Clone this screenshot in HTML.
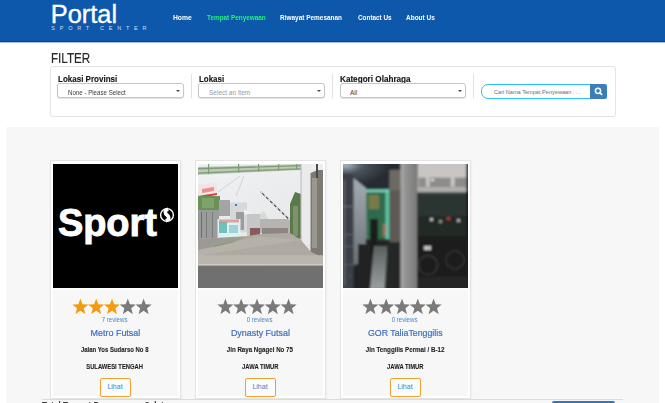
<!DOCTYPE html>
<html><head><meta charset="utf-8">
<style>
*{box-sizing:border-box;margin:0;padding:0}
html,body{width:665px;height:403px;overflow:hidden;background:#fff;font-family:"Liberation Sans",sans-serif;position:relative}
.a{position:absolute;white-space:nowrap}
.sx{display:inline-block;transform-origin:0 0}
.ctr span{display:inline-block;transform-origin:50% 0}
#hdr{left:0;top:0;width:665px;height:42px;background:#0e58ac;border-bottom:1px solid #0542a0;box-shadow:0 1px 0.6px rgba(10,70,156,.35)}
.logo{left:50.8px;top:-1px;font-size:25.4px;color:#fff;line-height:30px;-webkit-text-stroke:0.35px #fff}
.sub{left:51.3px;top:24.4px;font-size:5.5px;letter-spacing:4.75px;line-height:8px;color:#d4def0}
.nav{top:11px;font-size:7.5px;font-weight:bold;color:#fff;line-height:14px}
.title{left:50.9px;top:48px;font-size:14px;color:#2a2a2a;line-height:20px;-webkit-text-stroke:0.2px #2a2a2a}
#panel{left:50px;top:66px;width:566px;height:51px;border:1px solid #e3e3e3;border-radius:3px;background:#fff}
.lbl{font-size:9px;font-weight:bold;color:#161616;line-height:12px;top:73px;-webkit-text-stroke:0.15px #161616}
.sel{top:83.3px;height:14.4px;border:1px solid #c6c6c6;border-radius:3px;background:#fff;box-shadow:0 1px 1px rgba(0,0,0,.12)}
.sel>span{position:absolute;top:3.5px;font-size:6.5px;line-height:10px;color:#3a3a3a}
.sel i{position:absolute;right:3.2px;top:5.3px;width:0;height:0;border-left:2px solid transparent;border-right:2px solid transparent;border-top:2.6px solid #444}
.div{top:74px;width:1px;height:24px;background:#e2e2e2}
#srch{left:481px;top:84px;width:111px;height:15px;border:1.7px solid #2cbef4;border-radius:7px 0 0 7px;background:#fff}
#srch span{position:absolute;left:12px;top:2px;font-size:5.6px;color:#6e6e6e;line-height:10px}
#btn{left:590px;top:84px;width:17px;height:15px;background:#3a7fba;border-radius:0 2px 2px 0}
#sec{left:6px;top:127px;width:653px;height:280px;background:#f7f7f7}
.card{top:160px;width:131px;height:239.3px;background:#fff;border:1px solid #e4e4e4;box-shadow:1px 1px 1.5px rgba(0,0,0,.04)}
.img{top:163.5px;width:125px;height:124.5px;overflow:hidden}
.cbody{top:290px;width:125px;height:106px;background:#f7f7f7}
.ctr{width:120px;text-align:center}
.rev{top:315px;font-size:6.9px;color:#4a86c6;line-height:10px}
.name{top:326px;font-size:9.5px;color:#3a6ec0;line-height:14px;-webkit-text-stroke:0.2px #3a6ec0}
.addr{top:345px;font-size:6.5px;font-weight:bold;color:#1e1e1e;line-height:10px;-webkit-text-stroke:0.1px #1e1e1e}
.prov{top:362px;font-size:6.5px;font-weight:bold;color:#1e1e1e;line-height:10px;-webkit-text-stroke:0.1px #1e1e1e}
.lh{top:377.5px;width:31px;height:19px;border:1.6px solid #f0a030;border-radius:2px;background:#fbfbfb;font-size:7px;color:#4582cc;text-align:center;line-height:16.6px}

#hr{left:42px;top:399.3px;width:581px;height:1px;background:#dcdcdc}
#ft{left:42px;top:399px;font-size:9px;font-weight:bold;color:#3a3a3a;line-height:12px}
#fbtn{left:552px;top:401px;width:63px;height:10px;background:#3479b6;border-radius:2px}

</style></head><body>
<div id="hdr" class="a"></div>
<div class="a logo">Portal</div>
<div class="a sub">SPORT CENTER</div>
<div class="a nav" style="left:172.5px"><span class="sx" style="transform:scaleX(0.9)">Home</span></div>
<div class="a nav" style="left:206.5px;color:#1ff57a"><span class="sx" style="transform:scaleX(0.85)">Tempat Penyewaan</span></div>
<div class="a nav" style="left:280px"><span class="sx" style="transform:scaleX(0.86)">Riwayat Pemesanan</span></div>
<div class="a nav" style="left:357.5px"><span class="sx" style="transform:scaleX(0.85)">Contact Us</span></div>
<div class="a nav" style="left:406px"><span class="sx" style="transform:scaleX(0.865)">About Us</span></div>

<div class="a title"><span class="sx" style="transform:scaleX(0.83)">FILTER</span></div>
<div id="panel" class="a"></div>
<div class="a lbl" style="left:58px"><span class="sx" style="transform:scaleX(0.89)">Lokasi Provinsi</span></div>
<div class="a lbl" style="left:199px"><span class="sx" style="transform:scaleX(0.88)">Lokasi</span></div>
<div class="a lbl" style="left:340px"><span class="sx" style="transform:scaleX(0.905)">Kategori Olahraga</span></div>
<div class="a sel" style="left:57px;width:127px"><span style="left:10px"><span class="sx" style="transform:scaleX(0.945)">None - Please Select</span></span><i></i></div>
<div class="a sel" style="left:198px;width:127px"><span style="left:10px;color:#999">Select an item</span><i></i></div>
<div class="a sel" style="left:340px;width:126px"><span style="left:9px">All</span><i></i></div>
<div class="a div" style="left:191px"></div>
<div class="a div" style="left:332px"></div>
<div class="a div" style="left:473px"></div>
<div id="srch" class="a"><span>Cari Nama Tempat Penyewaan . . .</span></div>
<div id="btn" class="a"><svg width="17" height="15" viewBox="0 0 17 15"><circle cx="8" cy="6.8" r="2.6" fill="none" stroke="#fff" stroke-width="1.5"/><line x1="9.8" y1="8.6" x2="11.6" y2="10.4" stroke="#fff" stroke-width="1.7" stroke-linecap="round"/></svg></div>

<div id="sec" class="a"></div>

<div class="a card" style="left:49.5px"></div>
<div class="a img" style="left:52.5px"><div style="position:absolute;left:0;top:0;width:125px;height:125px;background:#000"></div>
<div style="position:absolute;left:5.5px;top:37.5px;font-size:38px;font-weight:bold;color:#fff;line-height:44px;letter-spacing:-0.1px;-webkit-text-stroke:0.9px #fff">Sport</div>
<svg style="position:absolute;left:106.8px;top:43.4px" width="16" height="16" viewBox="0 0 16 16"><circle cx="8" cy="8" r="7.1" fill="#fff"/><circle cx="8" cy="8" r="5.7" fill="#000"/><path d="M9.2,2.2 C4.8,3.6 6.2,6.6 8,8 C9.8,9.4 11.2,12.4 6.8,13.8" fill="none" stroke="#fff" stroke-width="3.6"/></svg>
</div>
<div class="a cbody" style="left:52.5px"></div>
<svg class="a" style="left:72.0px;top:298px" width="84" height="20" viewBox="0 0 84 20"><polygon points="8.40,0.60 10.52,6.28 16.58,6.54 11.84,10.32 13.45,16.16 8.40,12.81 3.35,16.16 4.96,10.32 0.22,6.54 6.28,6.28" fill="#f39c12" stroke="#fff" stroke-width="1" stroke-linejoin="round" paint-order="stroke"/><polygon points="24.20,0.60 26.32,6.28 32.38,6.54 27.64,10.32 29.25,16.16 24.20,12.81 19.15,16.16 20.76,10.32 16.02,6.54 22.08,6.28" fill="#f39c12" stroke="#fff" stroke-width="1" stroke-linejoin="round" paint-order="stroke"/><polygon points="40.00,0.60 42.12,6.28 48.18,6.54 43.44,10.32 45.05,16.16 40.00,12.81 34.95,16.16 36.56,10.32 31.82,6.54 37.88,6.28" fill="#f39c12" stroke="#fff" stroke-width="1" stroke-linejoin="round" paint-order="stroke"/><polygon points="55.80,0.60 57.92,6.28 63.98,6.54 59.24,10.32 60.85,16.16 55.80,12.81 50.75,16.16 52.36,10.32 47.62,6.54 53.68,6.28" fill="#7a7a7a" stroke="#fff" stroke-width="1" stroke-linejoin="round" paint-order="stroke"/><polygon points="71.60,0.60 73.72,6.28 79.78,6.54 75.04,10.32 76.65,16.16 71.60,12.81 66.55,16.16 68.16,10.32 63.42,6.54 69.48,6.28" fill="#7a7a7a" stroke="#fff" stroke-width="1" stroke-linejoin="round" paint-order="stroke"/></svg>
<div class="a ctr rev" style="left:55.0px"><span style="transform:scaleX(0.885)">7 reviews</span></div>
<div class="a ctr name" style="left:55.0px"><span style="transform:scaleX(0.945)">Metro Futsal</span></div>
<div class="a ctr addr" style="left:55.0px"><span style="transform:scaleX(0.92)">Jalan Yos Sudarso No 8</span></div>
<div class="a ctr prov" style="left:55.0px"><span style="transform:scaleX(0.897)">SULAWESI TENGAH</span></div>
<div class="a lh" style="left:99.5px"><span>Lihat</span></div>

<div class="a card" style="left:194.5px"></div>
<div class="a img" style="left:197.5px"><svg style="position:absolute;left:0;top:0" width="125" height="125" viewBox="0 0 125 125">
<defs><filter id="bl2" x="-5%" y="-5%" width="110%" height="110%"><feGaussianBlur stdDeviation="0.55"/></filter>
<linearGradient id="sky2" x1="0" y1="0" x2="0.3" y2="1"><stop offset="0" stop-color="#f0f1f2"/><stop offset="1" stop-color="#e2e4e6"/></linearGradient></defs>
<rect x="0" y="0" width="125" height="125" fill="url(#sky2)"/>
<g filter="url(#bl2)">
<polygon points="-2,3 104,0 104,6 -2,11" fill="#bccab6"/>
<polygon points="-2,4 104,1 104,2.3 -2,5.5" fill="#7f9c78"/>
<polygon points="-2,8.5 104,4 104,5.5 -2,10" fill="#86a07e"/>
<rect x="10" y="0" width="1.2" height="10" fill="#7f9c78"/>
<rect x="40" y="0" width="1.2" height="8.5" fill="#7f9c78"/>
<rect x="60" y="0" width="1.2" height="7.5" fill="#7f9c78"/>
<rect x="80" y="0" width="1.2" height="6.5" fill="#7f9c78"/>
<rect x="98" y="0" width="1.2" height="6" fill="#7f9c78"/>
<line x1="20" y1="28" x2="42" y2="12" stroke="#b0b4b8" stroke-width=".5"/>
<line x1="38" y1="32" x2="46" y2="12" stroke="#b0b4b8" stroke-width=".5"/>
<polygon points="0,21 19,18 19,31 0,34" fill="#f0e4e6"/>
<polygon points="4,25 16,23 16,27 4,29" fill="#e89090"/>
<polygon points="0,32 19,29 19,31 0,34" fill="#d04040"/>
<rect x="-2" y="32" width="24" height="16" fill="#6a9258"/>
<rect x="4" y="34" width="12" height="10" fill="#7ea26c"/>
<rect x="21" y="36" width="11" height="16" fill="#a2a4a6"/>
<rect x="32" y="38.5" width="17" height="30" fill="#d6d8da"/>
<rect x="37" y="40" width="2" height="2" fill="#3a7ad8"/>
<rect x="38" y="48" width="8" height="18" fill="#9a9c9e"/>
<polygon points="46,45 56,51 56,53 46,50" fill="#f0f0f0"/>
<rect x="-2" y="46" width="23" height="29" fill="#9a9c9c"/>
<rect x="3" y="48" width="1" height="26" fill="#6a6c6c"/>
<rect x="8" y="48" width="1" height="26" fill="#7a7c7c"/>
<rect x="14" y="48" width="1" height="26" fill="#7a7c7c"/>
<rect x="-2" y="48" width="2.2" height="78" fill="#2a2a2a" opacity=".5"/>
<rect x="19.5" y="55" width="23" height="19" fill="#dff0f0"/>
<rect x="21" y="58" width="8" height="11" fill="#70c0bc"/>
<rect x="31" y="61" width="9" height="8" fill="#a0d0d8"/>
<rect x="21" y="55.5" width="20" height="3" fill="#e06a6a" opacity=".6"/>
<rect x="49" y="50" width="13" height="22" fill="#c4c6c8"/>
<rect x="52" y="64" width="10" height="8" fill="#8a5a5a"/>
<rect x="62" y="55" width="30" height="14" fill="#b6b4b2"/>
<polygon points="62,50 66,47 70,55 62,55" fill="#d8dada"/>
<rect x="64" y="64" width="26" height="6" fill="#8e8482"/>
<line x1="62.5" y1="27.6" x2="93" y2="57.3" stroke="#4a4a4a" stroke-width="1.2"/>
<line x1="62.5" y1="27.6" x2="93" y2="57.3" stroke="#eeeeee" stroke-width="1.2" stroke-dasharray="2.5 3"/>
<polygon points="92,73 92,40 97,28 103,30 103,75" fill="#5a7a4a"/>
<rect x="95" y="42" width="5" height="30" fill="#7e9270"/>
<rect x="103" y="0" width="10" height="80" fill="#eaeaea"/>
<rect x="102.5" y="0" width="1.2" height="80" fill="#c0c0c0"/>
<polygon points="112.5,9 120,6 125,6 125,94 112.5,88" fill="#7c7a72"/>
<rect x="114" y="14" width="5" height="70" fill="#9a988e"/>
<rect x="118" y="0" width="2" height="14" fill="#4a4a4a"/>
<polygon points="-2,75 50,72 62,70 92,69 103,76 113,88 125,94 125,92 -2,92" fill="#aeaaa2"/>
<polygon points="-2,75 48,73 30,80 -2,86" fill="#9c9a94"/>
<polygon points="15,82 35,78 40,79 18,84" fill="#7a9a5a"/>
<polygon points="-2,87 62,72.4 103,76 -2,92" fill="#b6b2aa"/>
<rect x="-2" y="91.2" width="129" height="9.6" fill="#bab6ae"/>
<rect x="-2" y="100.3" width="129" height="1.2" fill="#d4d2ce"/>
<rect x="-2" y="101.5" width="129" height="25" fill="#6f7070"/>
</g>
</svg>
</div>
<div class="a cbody" style="left:197.5px"></div>
<svg class="a" style="left:217.0px;top:298px" width="84" height="20" viewBox="0 0 84 20"><polygon points="8.40,0.60 10.52,6.28 16.58,6.54 11.84,10.32 13.45,16.16 8.40,12.81 3.35,16.16 4.96,10.32 0.22,6.54 6.28,6.28" fill="#7a7a7a" stroke="#fff" stroke-width="1" stroke-linejoin="round" paint-order="stroke"/><polygon points="24.20,0.60 26.32,6.28 32.38,6.54 27.64,10.32 29.25,16.16 24.20,12.81 19.15,16.16 20.76,10.32 16.02,6.54 22.08,6.28" fill="#7a7a7a" stroke="#fff" stroke-width="1" stroke-linejoin="round" paint-order="stroke"/><polygon points="40.00,0.60 42.12,6.28 48.18,6.54 43.44,10.32 45.05,16.16 40.00,12.81 34.95,16.16 36.56,10.32 31.82,6.54 37.88,6.28" fill="#7a7a7a" stroke="#fff" stroke-width="1" stroke-linejoin="round" paint-order="stroke"/><polygon points="55.80,0.60 57.92,6.28 63.98,6.54 59.24,10.32 60.85,16.16 55.80,12.81 50.75,16.16 52.36,10.32 47.62,6.54 53.68,6.28" fill="#7a7a7a" stroke="#fff" stroke-width="1" stroke-linejoin="round" paint-order="stroke"/><polygon points="71.60,0.60 73.72,6.28 79.78,6.54 75.04,10.32 76.65,16.16 71.60,12.81 66.55,16.16 68.16,10.32 63.42,6.54 69.48,6.28" fill="#7a7a7a" stroke="#fff" stroke-width="1" stroke-linejoin="round" paint-order="stroke"/></svg>
<div class="a ctr rev" style="left:200.0px"><span style="transform:scaleX(0.885)">0 reviews</span></div>
<div class="a ctr name" style="left:200.0px"><span style="transform:scaleX(0.94)">Dynasty Futsal</span></div>
<div class="a ctr addr" style="left:200.0px"><span style="transform:scaleX(0.95)">Jln Raya Ngagel No 75</span></div>
<div class="a ctr prov" style="left:200.0px"><span style="transform:scaleX(0.9)">JAWA TIMUR</span></div>
<div class="a lh" style="left:244.5px"><span>Lihat</span></div>

<div class="a card" style="left:339.5px"></div>
<div class="a img" style="left:342.5px"><svg style="position:absolute;left:0;top:0" width="125" height="125" viewBox="0 0 125 125">
<defs>
<filter id="bl3" x="-5%" y="-5%" width="110%" height="110%"><feGaussianBlur stdDeviation="0.8"/></filter>
<radialGradient id="glow3" cx="0.08" cy="0.1" r="0.7"><stop offset="0" stop-color="#a8b8c4"/><stop offset=".4" stop-color="#4a545c"/><stop offset="1" stop-color="#262c30"/></radialGradient>
<linearGradient id="pil3" x1="0" y1="0" x2="1" y2="0"><stop offset="0" stop-color="#acadad"/><stop offset=".3" stop-color="#929392"/><stop offset="1" stop-color="#787977"/></linearGradient>
<linearGradient id="str3" x1="0" y1="0" x2="0" y2="1"><stop offset="0" stop-color="#5a6060"/><stop offset="1" stop-color="#9aa0a0"/></linearGradient>
<linearGradient id="lw3" x1="0" y1="0" x2="0" y2="1"><stop offset="0" stop-color="#a4acb2"/><stop offset="1" stop-color="#6a7076"/></linearGradient>
</defs>
<rect x="0" y="0" width="125" height="125" fill="#222424"/>
<g filter="url(#bl3)">
<rect x="-2" y="-2" width="62" height="30" fill="url(#glow3)"/>
<rect x="-2" y="10" width="12.5" height="116" fill="#3a4046"/>
<rect x="1" y="16" width="1" height="106" fill="#70767c"/>
<rect x="-2" y="42" width="12" height="1" fill="#6a7076"/>
<rect x="-2" y="70" width="12" height="1" fill="#5a6066"/>
<rect x="-2" y="82" width="12" height="1" fill="#5a6066"/>
<rect x="-2" y="100" width="12" height="1" fill="#5a6066"/>
<rect x="-2" y="112" width="12" height="1" fill="#4a5056"/>
<polygon points="10.5,14 23,24 23,96 10.5,102" fill="url(#lw3)"/>
<rect x="15" y="80" width="17" height="46" fill="#202222"/>
<rect x="23" y="25.5" width="23.5" height="50" fill="#3a7a5a"/>
<rect x="42.5" y="25.5" width="4" height="50" fill="#58c4a4"/>
<rect x="23" y="25.5" width="23.5" height="2.5" fill="#78d0b4"/>
<rect x="25" y="29" width="17" height="46" fill="#2f6a4c"/>
<rect x="26" y="31" width="10" height="14" fill="#7a7a48"/>
<rect x="27" y="55" width="8" height="35" fill="#1a1c1c"/>
<rect x="40" y="60" width="3" height="12" fill="#a86a5a"/>
<rect x="46.5" y="6" width="11" height="72" fill="#5e5a54"/>
<rect x="46.5" y="6" width="11" height="20" fill="#6e6a64"/>
<polygon points="31,82 44.5,82 42,125 27,125" fill="url(#str3)"/>
<rect x="44.5" y="78" width="13" height="48" fill="#262626"/>
<rect x="57.5" y="-2" width="17" height="128" fill="url(#pil3)"/>
<rect x="74.5" y="-2" width="52" height="30.4" fill="#c8c5c2"/>
<rect x="74.5" y="22" width="52" height="6.4" fill="#b0aeac"/>
<rect x="75.5" y="13.6" width="7.5" height="9.4" fill="#8e8c8a"/>
<rect x="86.7" y="13.6" width="21" height="9.4" fill="#8e8c8a"/>
<rect x="111.7" y="13.6" width="11.5" height="9.4" fill="#8e8c8a"/>
<rect x="88" y="15" width="3" height="2" fill="#e8e8e8"/>
<rect x="74.5" y="28.4" width="52" height="50" fill="#2c3632"/>
<rect x="74.5" y="28.4" width="52" height="1.5" fill="#46544c"/>
<rect x="74.5" y="70" width="52" height="56" fill="#1c1e1e"/>
<rect x="74.5" y="52" width="52" height="20" fill="#242a28"/>
<circle cx="85" cy="101" r="9.5" fill="none" stroke="#383a3a" stroke-width="1.4"/>
<circle cx="112" cy="96" r="9" fill="none" stroke="#343636" stroke-width="1.4"/>
<rect x="81" y="82" width="7" height="4" fill="#c0c0c0"/>
<rect x="104" y="53" width="3" height="3" fill="#c03030"/>
<rect x="87" y="54" width="3" height="3" fill="#b8b8b8"/>
<rect x="96" y="56" width="3" height="3" fill="#8a8a8a"/>
<rect x="114" y="55" width="3" height="3" fill="#a8a8a8"/>
<rect x="123.4" y="-2" width="3" height="128" fill="#1a1a1a"/>
<rect x="74.5" y="113" width="52" height="13" fill="#282828"/>
</g>
</svg>
</div>
<div class="a cbody" style="left:342.5px"></div>
<svg class="a" style="left:362.0px;top:298px" width="84" height="20" viewBox="0 0 84 20"><polygon points="8.40,0.60 10.52,6.28 16.58,6.54 11.84,10.32 13.45,16.16 8.40,12.81 3.35,16.16 4.96,10.32 0.22,6.54 6.28,6.28" fill="#7a7a7a" stroke="#fff" stroke-width="1" stroke-linejoin="round" paint-order="stroke"/><polygon points="24.20,0.60 26.32,6.28 32.38,6.54 27.64,10.32 29.25,16.16 24.20,12.81 19.15,16.16 20.76,10.32 16.02,6.54 22.08,6.28" fill="#7a7a7a" stroke="#fff" stroke-width="1" stroke-linejoin="round" paint-order="stroke"/><polygon points="40.00,0.60 42.12,6.28 48.18,6.54 43.44,10.32 45.05,16.16 40.00,12.81 34.95,16.16 36.56,10.32 31.82,6.54 37.88,6.28" fill="#7a7a7a" stroke="#fff" stroke-width="1" stroke-linejoin="round" paint-order="stroke"/><polygon points="55.80,0.60 57.92,6.28 63.98,6.54 59.24,10.32 60.85,16.16 55.80,12.81 50.75,16.16 52.36,10.32 47.62,6.54 53.68,6.28" fill="#7a7a7a" stroke="#fff" stroke-width="1" stroke-linejoin="round" paint-order="stroke"/><polygon points="71.60,0.60 73.72,6.28 79.78,6.54 75.04,10.32 76.65,16.16 71.60,12.81 66.55,16.16 68.16,10.32 63.42,6.54 69.48,6.28" fill="#7a7a7a" stroke="#fff" stroke-width="1" stroke-linejoin="round" paint-order="stroke"/></svg>
<div class="a ctr rev" style="left:345.0px"><span style="transform:scaleX(0.885)">0 reviews</span></div>
<div class="a ctr name" style="left:345.0px"><span style="transform:scaleX(0.925)">GOR TaliaTenggilis</span></div>
<div class="a ctr addr" style="left:345.0px"><span style="transform:scaleX(0.957)">Jln Tenggilis Permai / B-12</span></div>
<div class="a ctr prov" style="left:345.0px"><span style="transform:scaleX(0.9)">JAWA TIMUR</span></div>
<div class="a lh" style="left:389.5px"><span>Lihat</span></div>

<div id="hr" class="a"></div>
<div id="ft" class="a"><span class="sx" style="transform:scaleX(0.9)">Total Tempat Penyewaan : 3 data</span></div>
<div id="fbtn" class="a"></div>

</body></html>
